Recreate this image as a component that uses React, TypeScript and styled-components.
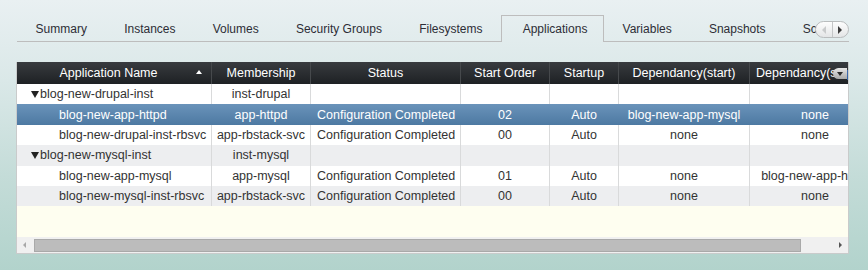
import React from 'react'
import styled, { createGlobalStyle } from 'styled-components'

const GlobalStyle = createGlobalStyle`
  html, body {
    margin: 0;
    padding: 0;
  }
  body {
    font-family: "Liberation Sans", Arial, sans-serif;
  }
`

const Page = styled.div`
  box-sizing: border-box;
  width: 868px;
  height: 270px;
  overflow: hidden;
  padding: 15px 18px 0 16px;
  background: linear-gradient(to bottom, #e9f0f2 0%, #dae8e8 30%, #c4dcd8 65%, #b2d3cc 100%);
`

const TabStrip = styled.div`
  position: relative;
  width: 833px;
  height: 27px;
`

const TabList = styled.div`
  display: flex;
  align-items: flex-end;
  height: 27px;
  overflow: hidden;
  padding-left: 1px;
`

const Tab = styled.div<{ $active?: boolean }>`
  flex: none;
  box-sizing: border-box;
  height: 27px;
  padding: 1px 18.6px 0;
  display: flex;
  align-items: center;
  font-size: 12px;
  color: #2d2d36;
  white-space: nowrap;
  border-bottom: 1px solid #bdbdbd;
  ${(p) =>
    p.$active &&
    `
    border: 1px solid #bdbdbd;
    border-bottom: 0;
    padding: 0 15.6px 1px 20.6px;
  `}
`

const TabFill = styled.div`
  flex: 1;
  height: 27px;
  box-sizing: border-box;
  border-bottom: 1px solid #bdbdbd;
`

const ScrollPill = styled.div`
  position: absolute;
  right: 0;
  top: 6px;
  width: 34px;
  height: 17px;
  display: flex;
  border: 1px solid #b9bcbd;
  border-radius: 9px;
  background: linear-gradient(to bottom, #fdfdfd, #e4e6e7);
  box-sizing: border-box;
  overflow: hidden;
`

const PillHalf = styled.div<{ $divider?: boolean }>`
  flex: 1;
  display: flex;
  align-items: center;
  justify-content: center;
  ${(p) => p.$divider && 'border-right: 1px solid #c4c6c7;'}
`

const Arrow = styled.span<{ $dir: 'left' | 'right'; $color: string; $size?: number }>`
  width: 0;
  height: 0;
  border-top: ${(p) => p.$size ?? 4}px solid transparent;
  border-bottom: ${(p) => p.$size ?? 4}px solid transparent;
  ${(p) =>
    p.$dir === 'left'
      ? `border-right: ${p.$size ?? 4}px solid ${p.$color};`
      : `border-left: ${p.$size ?? 4}px solid ${p.$color};`}
`

const Grid = styled.div`
  position: relative;
  margin-top: 20px;
  width: 833px;
  box-sizing: border-box;
  border: 1px solid #c9cbcb;
  border-top: 0;
  background: #fefef0;
  font-size: 12.5px;
`

const Viewport = styled.div`
  width: 831px;
  overflow: hidden;
`

const cols = '195px 99px 150px 89px 69px 131px 131px'

const HeaderRow = styled.div`
  display: grid;
  grid-template-columns: ${cols};
  width: 864px;
  height: 22px;
  background: linear-gradient(to bottom, #383b3f, #1e2124);
`

const HeaderCell = styled.div<{ $start?: boolean }>`
  display: flex;
  align-items: center;
  justify-content: ${(p) => (p.$start ? 'flex-start' : 'center')};
  padding-left: ${(p) => (p.$start ? 6 : 0)}px;
  color: #ffffff;
  border-right: 1px solid #46494c;
  white-space: nowrap;
  overflow: hidden;
`

const HeaderLabel = styled.span`
  flex: 1;
  text-align: center;
  padding-left: 4px;
`

const SortUp = styled.span`
  width: 0;
  height: 0;
  margin: 0 9px 2px 0;
  border-left: 3px solid transparent;
  border-right: 3px solid transparent;
  border-bottom: 4px solid #ffffff;
`

const MenuButton = styled.div`
  position: absolute;
  right: 1px;
  top: 6px;
  width: 14px;
  height: 11px;
  border-radius: 6px 0 0 6px;
  background: linear-gradient(to bottom, #e6e6e6, #a9a9a9);
  display: flex;
  align-items: center;
  justify-content: center;
  &::after {
    content: '';
    border-left: 3px solid transparent;
    border-right: 3px solid transparent;
    border-top: 4px solid #2a2a2a;
  }
`

const Body = styled.div`
  height: 153px;
`

const Row = styled.div<{ $tone: 'white' | 'gray' | 'selected' }>`
  display: grid;
  grid-template-columns: ${cols};
  width: 864px;
  height: 20.4px;
  color: ${(p) => (p.$tone === 'selected' ? '#ffffff' : '#333333')};
  background: ${(p) =>
    p.$tone === 'selected'
      ? 'linear-gradient(to bottom, #6a93ba, #4d79a2)'
      : p.$tone === 'gray'
      ? '#edeef0'
      : '#ffffff'};
  & > div {
    border-right: 1px solid ${(p) => (p.$tone === 'selected' ? 'transparent' : '#d9dadb')};
  }
`

const Cell = styled.div<{ $align?: 'left' | 'center'; $indent?: number }>`
  display: flex;
  align-items: center;
  justify-content: ${(p) => (p.$align === 'left' ? 'flex-start' : 'center')};
  padding-left: ${(p) => p.$indent ?? 0}px;
  white-space: nowrap;
  overflow: hidden;
`

const Toggle = styled.span`
  width: 0;
  height: 0;
  margin: 1px 1px 0 0;
  border-left: 4.5px solid transparent;
  border-right: 4.5px solid transparent;
  border-top: 7px solid #222222;
`

const HScroll = styled.div`
  height: 16px;
  display: flex;
  align-items: center;
  background: #f0f0f0;
  padding: 0 6px;
  gap: 8px;
`

const Thumb = styled.div`
  width: 765px;
  height: 11px;
  background: #bcbcbc;
  border: 1px solid #a9a9a9;
`

const Spacer = styled.div`
  flex: 1;
`

type RowData = {
  tone: 'white' | 'gray' | 'selected'
  group?: boolean
  name: string
  membership: string
  status?: string
  order?: string
  startup?: string
  depStart?: string
  depStop?: string
}

const rows: RowData[] = [
  { tone: 'white', group: true, name: 'blog-new-drupal-inst', membership: 'inst-drupal' },
  {
    tone: 'selected',
    name: 'blog-new-app-httpd',
    membership: 'app-httpd',
    status: 'Configuration Completed',
    order: '02',
    startup: 'Auto',
    depStart: 'blog-new-app-mysql',
    depStop: 'none',
  },
  {
    tone: 'white',
    name: 'blog-new-drupal-inst-rbsvc',
    membership: 'app-rbstack-svc',
    status: 'Configuration Completed',
    order: '00',
    startup: 'Auto',
    depStart: 'none',
    depStop: 'none',
  },
  { tone: 'gray', group: true, name: 'blog-new-mysql-inst', membership: 'inst-mysql' },
  {
    tone: 'white',
    name: 'blog-new-app-mysql',
    membership: 'app-mysql',
    status: 'Configuration Completed',
    order: '01',
    startup: 'Auto',
    depStart: 'none',
    depStop: 'blog-new-app-httpd',
  },
  {
    tone: 'gray',
    name: 'blog-new-mysql-inst-rbsvc',
    membership: 'app-rbstack-svc',
    status: 'Configuration Completed',
    order: '00',
    startup: 'Auto',
    depStart: 'none',
    depStop: 'none',
  },
]

const tabs = [
  'Summary',
  'Instances',
  'Volumes',
  'Security Groups',
  'Filesystems',
  'Applications',
  'Variables',
  'Snapshots',
  'Scripts',
]

const headers = ['Membership', 'Status', 'Start Order', 'Startup', 'Dependancy(start)']

const App: React.FC = () => {
  return (
    <Page>
      <GlobalStyle />
      <TabStrip>
        <TabList>
          {tabs.map((t) => (
            <Tab key={t} $active={t === 'Applications'}>
              {t}
            </Tab>
          ))}
          <TabFill />
        </TabList>
        <ScrollPill>
          <PillHalf $divider>
            <Arrow $dir="left" $color="#c9cbcc" />
          </PillHalf>
          <PillHalf>
            <Arrow $dir="right" $color="#3a3a3a" />
          </PillHalf>
        </ScrollPill>
      </TabStrip>

      <Grid>
        <Viewport>
          <HeaderRow>
            <HeaderCell>
              <HeaderLabel>Application Name</HeaderLabel>
              <SortUp />
            </HeaderCell>
            {headers.map((h) => (
              <HeaderCell key={h}>{h}</HeaderCell>
            ))}
            <HeaderCell $start>Dependancy(stop)</HeaderCell>
          </HeaderRow>
          <Body>
            {rows.map((r) => (
              <Row key={r.name} $tone={r.tone}>
                <Cell $align="left" $indent={r.group ? 14 : 42}>
                  {r.group && <Toggle />}
                  {r.name}
                </Cell>
                <Cell>{r.membership}</Cell>
                <Cell $align="left" $indent={6}>
                  {r.status}
                </Cell>
                <Cell>{r.order}</Cell>
                <Cell>{r.startup}</Cell>
                <Cell>{r.depStart}</Cell>
                <Cell>{r.depStop}</Cell>
              </Row>
            ))}
          </Body>
        </Viewport>
        <MenuButton />
        <HScroll>
          <Arrow $dir="left" $color="#a8a8a8" $size={3} />
          <Thumb />
          <Spacer />
          <Arrow $dir="right" $color="#555555" $size={3} />
        </HScroll>
      </Grid>
    </Page>
  )
}

export default App
